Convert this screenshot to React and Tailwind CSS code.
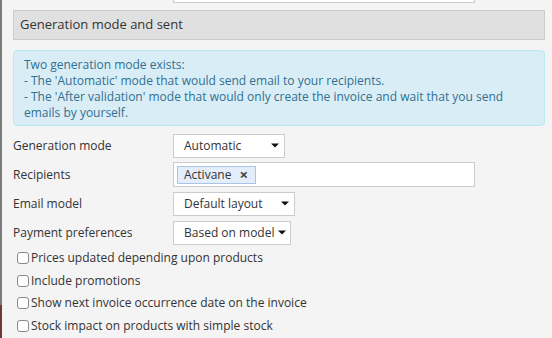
import React from "react";

const font = { fontFamily: '"Open Sans", "Noto Sans", sans-serif' };

function Caret() {
  return (
    <svg width="8" height="5" viewBox="0 0 8 5" className="shrink-0">
      <path d="M0 0.5 H8 L4 4.5 Z" fill="#111" />
    </svg>
  );
}

function Select({ value, width }) {
  return (
    <div
      className={`flex h-[24px] items-center justify-between gap-[4px] whitespace-nowrap border border-[#cccccc] bg-white pl-[10px] pr-[5px] text-[12px] text-[#333] ${width}`}
    >
      <span>{value}</span>
      <Caret />
    </div>
  );
}

function Row({ label, children }) {
  return (
    <div className="flex h-[29px] items-center">
      <div className="w-[160px] text-[12px] text-[#333]">{label}</div>
      {children}
    </div>
  );
}

function Check({ label }) {
  return (
    <div className="flex h-[22.5px] items-center pl-[4px]">
      <span className="mr-[2px] h-[12px] w-[12px] rounded-[3px] border border-[#8a8a8a] bg-white" />
      <span className="text-[12px] text-[#333]">{label}</span>
    </div>
  );
}

export default function App() {
  return (
    <div className="relative h-[338px] w-[552px] overflow-hidden bg-[#f4f4f4]" style={font}>
      <div className="absolute left-0 top-0 h-[305px] w-[2px] bg-[#7a7a7a]" />
      <div className="absolute left-0 top-[305px] h-[33px] w-[2px] bg-[#6b3b32]" />
      <div className="ml-[173px] -mt-[20px] h-[23px] w-[302px] border border-[#cccccc] bg-white" />
      <div className="pl-[13px] pr-[7px]">
        <div className="mt-[7px] flex h-[30px] items-center border border-[#cccccc] bg-[#e0e0e0] px-[6px] text-[13px] text-[#333]">
          Generation mode and sent
        </div>
        <div className="mt-[10px] rounded-[4px] border border-[#bce8f1] bg-[#d9edf7] px-[10px] pt-[6px] pb-[4px] text-[12px] leading-[16px] text-[#31708f]">
          Two generation mode exists:
          <br />- The 'Automatic' mode that would send email to your recipients.
          <br />- The 'After validation' mode that would only create the invoice and wait that you send emails by yourself.
        </div>
        <div className="mt-[5px]">
          <Row label="Generation mode">
            <Select value="Automatic" width="w-[112px]" />
          </Row>
          <Row label="Recipients">
            <div className="flex h-[25px] w-[302px] items-center border border-[#cccccc] bg-white pl-[3px]">
              <div className="flex h-[18px] w-[79px] items-center border border-[#aac4e6] bg-[#e4eefa] pl-[6px] text-[12px] text-[#333]">
                <span>Activane</span>
                <span className="ml-[8px] text-[15px] font-bold leading-none text-[#444]">×</span>
              </div>
            </div>
          </Row>
          <Row label="Email model">
            <Select value="Default layout" width="w-[122px]" />
          </Row>
          <Row label="Payment preferences">
            <Select value="Based on model" width="w-[118px]" />
          </Row>
        </div>
        <div className="mt-0">
          <Check label="Prices updated depending upon products" />
          <Check label="Include promotions" />
          <Check label="Show next invoice occurrence date on the invoice" />
          <Check label="Stock impact on products with simple stock" />
        </div>
      </div>
    </div>
  );
}
